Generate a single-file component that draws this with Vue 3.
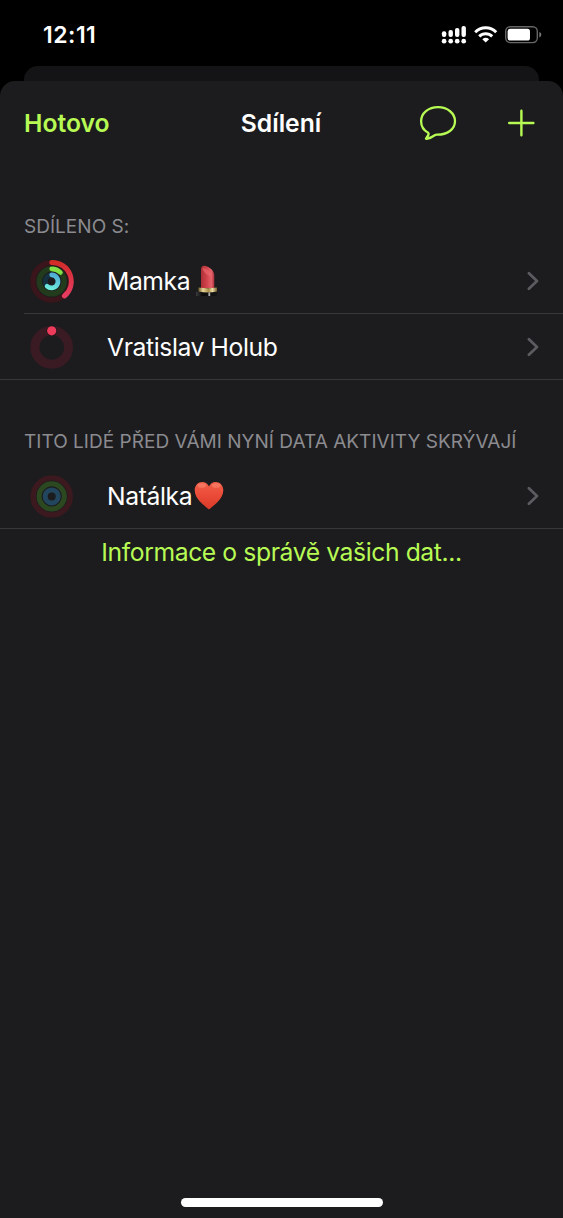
<script setup>
const sections = [
  {
    title: 'SDÍLENO S:',
    cls: 'first',
    rows: [
      { name: 'Mamka', cls: 'mamka', rings: 'active', emoji: 'lipstick' },
      { name: 'Vratislav Holub', cls: 'vratislav', rings: 'single' }
    ]
  },
  {
    title: 'TITO LIDÉ PŘED VÁMI NYNÍ DATA AKTIVITY SKRÝVAJÍ',
    cls: 'second',
    rows: [{ name: 'Natálka', cls: 'natalka', rings: 'hidden', emoji: 'heart' }]
  }
]
</script>

<template>
  <div class="phone">
    <header class="status">
      <span class="time">12:11</span>
      <svg class="status-icons" width="102" height="22" viewBox="0 0 102 22">
        <g fill="#fff">
          <rect x="1.9" y="7.2" width="4.4" height="5.8" rx="2" />
          <rect x="8.5" y="6" width="4.4" height="7" rx="2" />
          <rect x="15" y="4" width="4.4" height="9" rx="2" />
          <rect x="21.5" y="2" width="4.4" height="11" rx="2" />
          <circle cx="4.1" cy="17.2" r="2.35" />
          <circle cx="10.7" cy="17.2" r="2.35" />
          <circle cx="17.2" cy="17.2" r="2.35" />
          <circle cx="23.7" cy="17.2" r="2.35" />
        </g>
        <g fill="none" stroke="#fff" stroke-width="2.9">
          <path d="M35.2 8.3a14.4 14.4 0 0 1 21 0" />
          <path d="M39.2 12.4a9.2 9.2 0 0 1 13 0" />
        </g>
        <path d="M42.3 15.2a5.2 5.2 0 0 1 6.8 0l-3.4 3.4z" fill="#fff" />
        <rect x="65.7" y="2.8" width="31.6" height="15.8" rx="4.5" fill="none" stroke="#666" stroke-width="1.4" />
        <rect x="67.6" y="4.8" width="22.4" height="11.8" rx="2.6" fill="#fff" />
        <path d="M99.3 8v5.4c1.2-.5 2-1.500 2-2.700s-.8-2.200-2-2.700z" fill="#777" />
      </svg>
    </header>
    <div class="back-sheet"></div>
    <main class="sheet">
      <nav class="bar">
        <span class="done">Hotovo</span>
        <span class="title">Sdílení</span>
        <div class="actions">
          <svg width="40" height="38" viewBox="0 0 40 38" fill="none" stroke="#b7fa54" stroke-width="2.3" stroke-linejoin="round">
            <path d="M20 3.200C10.400 3.200 3.100 9.300 3.100 17.200C3.100 22.200 5.900 26.400 10.200 28.800C10.700 29.200 10.800 29.800 10.500 30.500C10 31.800 9 33.200 8.200 34.200C7.700 34.800 8 35.100 8.800 34.900C12 34.200 14.600 32.700 16.700 31.200C17.400 30.800 18 30.700 18.800 30.700C29.500 30.900 37 25.100 37 17.200C37 9.300 29.600 3.200 20 3.200Z" />
          </svg>
          <svg width="28" height="28" viewBox="0 0 28 28" stroke="#b7fa54" stroke-width="2.4" stroke-linecap="round">
            <path d="M2.200 14H26.400M14.400 1.800V26.200" />
          </svg>
        </div>
      </nav>

      <section v-for="s in sections" :key="s.title" :class="['group', s.cls]">
        <h2><span>{{ s.title }}</span></h2>
        <ul>
          <li v-for="r in s.rows" :key="r.name">
            <svg class="rings" width="44" height="44" viewBox="-21.700 -22.400 44 44" fill="none">
              <template v-if="r.rings === 'active'">
                <circle r="18.700" stroke="#3a151b" stroke-width="5.400" />
                <circle r="12.500" stroke="#223b1c" stroke-width="5.400" />
                <circle r="6.400" stroke="#15303e" stroke-width="5" />
                <path d="M0-18.900A18.900 18.900 0 0 1 12.700 14.600" stroke="url(#move)" stroke-width="4.900" stroke-linecap="round" />
                <path d="M0-12.600A12.600 12.600 0 0 1 8.700-9" stroke="#81df45" stroke-width="4.700" stroke-linecap="round" />
                <path d="M0-6.500A6.500 6.500 0 1 1-4.600 4.800" stroke="url(#stand)" stroke-width="4.700" stroke-linecap="round" />
              </template>
              <template v-else-if="r.rings === 'single'">
                <circle r="16.800" stroke="#3a1b24" stroke-width="9" />
                <circle cy="-16.600" r="5.200" fill="#1b1518" />
                <circle cy="-16.600" r="4.600" fill="#ee3b5b" />
              </template>
              <template v-else>
                <circle r="18.500" stroke="#3c191f" stroke-width="5.400" />
                <circle r="12.600" stroke="#2b4820" stroke-width="5" />
                <circle r="6.500" stroke="#22465d" stroke-width="5" />
              </template>
            </svg>
            <span class="name"><span :class="r.cls">{{ r.name }}</span></span>
            <svg v-if="r.emoji === 'lipstick'" class="lipstick" width="26" height="34" viewBox="0 0 26 34">
              <path d="M6 24V5.500C6 2.600 8 1.300 10.300 2C15 3.400 19 6.500 19.300 11V24Z" fill="url(#lip)" />
              <path d="M7.500 4.500C10 3 16.500 8 17 12.300C13 12 8.500 9 7.500 4.500Z" fill="#ec686d" opacity=".65" />
              <path d="M1 27.800H22V32H1Z" fill="url(#base)" />
              <path d="M3.500 23.400Q12.500 25 22 23.400V27.600Q12.500 29.400 3.500 27.600Z" fill="url(#gold)" />
              <path d="M13.400 28.400h1.800v3.600h-1.800z" fill="#b1b0ae" />
            </svg>
            <svg v-if="r.emoji === 'heart'" class="heart" width="30" height="30" viewBox="0 0 30 30">
              <path d="M15 28.600C10.500 24.300.7 18.300.7 9.200C.7 4.200 4.200.9 8.300.9C11.500.9 13.900 2.700 15 5.400C16.100 2.700 18.500.9 21.700.9C25.800.9 29.300 4.200 29.300 9.200C29.300 18.300 19.500 24.300 15 28.600Z" fill="url(#love)" />
              <ellipse cx="7.800" cy="4.500" rx="4.300" ry="2.300" fill="#ff8a72" opacity=".55" />
              <ellipse cx="22.200" cy="4.500" rx="4.300" ry="2.300" fill="#ff8a72" opacity=".55" />
            </svg>
            <svg class="chevron" width="12" height="20" viewBox="0 0 12 20" fill="none" stroke="#5c5c60" stroke-width="2.700" stroke-linecap="round" stroke-linejoin="round">
              <path d="M1.900 2.200L10 10L1.900 17.800" />
            </svg>
          </li>
        </ul>
      </section>
      <p class="info"><span>Informace o správě vašich dat...</span></p>
      <div class="home"></div>
    </main>

    <svg class="defs" width="0" height="0">
      <defs>
        <linearGradient id="move" gradientUnits="userSpaceOnUse" x1="0" y1="-19" x2="8" y2="18">
          <stop offset="0" stop-color="#d22b27" />
          <stop offset="1" stop-color="#e83d64" />
        </linearGradient>
        <linearGradient id="stand" gradientUnits="userSpaceOnUse" x1="2" y1="-8" x2="-3" y2="8">
          <stop offset="0" stop-color="#4fa9d6" />
          <stop offset="1" stop-color="#6ff0dc" />
        </linearGradient>
        <linearGradient id="lip">
          <stop offset="0" stop-color="#ad3036" />
          <stop offset=".4" stop-color="#cf4149" />
          <stop offset=".78" stop-color="#e4626a" />
          <stop offset="1" stop-color="#a92f38" />
        </linearGradient>
        <linearGradient id="gold">
          <stop offset="0" stop-color="#75602f" />
          <stop offset=".25" stop-color="#e7d698" />
          <stop offset=".55" stop-color="#a88c46" />
          <stop offset=".75" stop-color="#eedfa6" />
          <stop offset="1" stop-color="#77602f" />
        </linearGradient>
        <linearGradient id="base">
          <stop offset="0" stop-color="#3c3c3e" />
          <stop offset=".3" stop-color="#0b0b0c" />
          <stop offset="1" stop-color="#151515" />
        </linearGradient>
        <linearGradient id="love" x1="0" y1="0" x2="0" y2="1">
          <stop offset="0" stop-color="#f2604a" />
          <stop offset=".5" stop-color="#ea4a37" />
          <stop offset="1" stop-color="#d93a29" />
        </linearGradient>
      </defs>
    </svg>
  </div>
</template>

<style>
body {
  background: #000;
}
</style>

<style scoped>
.phone {
  width: 563px;
  height: 1218px;
  overflow: hidden;
  background: #000;
  color: #fff;
  font-family: Inter, "Liberation Sans", sans-serif;
  display: flex;
  flex-direction: column;
}
.status {
  height: 66px;
  flex: none;
  display: flex;
  justify-content: space-between;
  padding: 24px 21px 0 43px;
  box-sizing: border-box;
}
.time {
  font-size: 23px;
  line-height: 22px;
  font-weight: 600;
  letter-spacing: 0.5px;
}
.back-sheet {
  height: 15px;
  flex: none;
  margin: 0 24px;
  border-radius: 14px 14px 0 0;
  background: #141416;
}
.sheet {
  flex: 1;
  display: flex;
  flex-direction: column;
  background: #1c1c1e;
  border-radius: 15px 15px 0 0;
}
.bar {
  height: 84px;
  display: grid;
  grid-template-columns: 1fr auto 1fr;
  align-items: center;
  padding: 0 28px 0 24px;
  flex: none;
}
.done,
.title {
  font-size: 24.700px;
  font-weight: 600;
  line-height: 30px;
}
.done {
  color: #b7fa54;
}
.title {
  padding-left: 3px;
}
.actions {
  display: flex;
  align-items: center;
  justify-content: flex-end;
  gap: 49px;
}
.group {
  flex: none;
}
h2 {
  margin: 0;
  padding-left: 24px;
  font-size: 19px;
  font-weight: 400;
  line-height: 24px;
  letter-spacing: 0.030px;
  color: #8b8b90;
  white-space: nowrap;
}
.first,
.second {
  padding-top: 50px;
}
ul {
  list-style: none;
  margin: 9px 0 0;
  padding: 0;
}
li {
  height: 66px;
  box-sizing: border-box;
  display: flex;
  align-items: center;
  padding: 0 24px 0 30px;
  border-bottom: 1px solid #37373a;
}
li:not(:last-child) {
  margin-left: 24px;
  padding-left: 6px;
}
.rings {
  flex: none;
}
.name {
  margin-left: 33px;
  padding-top: 1px;
  font-size: 24.700px;
  line-height: 30px;
  letter-spacing: -0.400px;
  white-space: nowrap;
}
.chevron {
  margin-left: auto;
}
.lipstick {
  margin-left: 5px;
}
.heart {
  margin-left: 2px;
}
.info {
  margin: 8px 0 0;
  text-align: center;
  font-size: 24.700px;
  line-height: 30px;
  letter-spacing: -0.400px;
  color: #b7fa54;
  white-space: nowrap;
}
.home {
  width: 202px;
  height: 9px;
  border-radius: 5px;
  background: #fff;
  margin: auto auto 11px;
}
.defs {
  display: block;
}
</style>
